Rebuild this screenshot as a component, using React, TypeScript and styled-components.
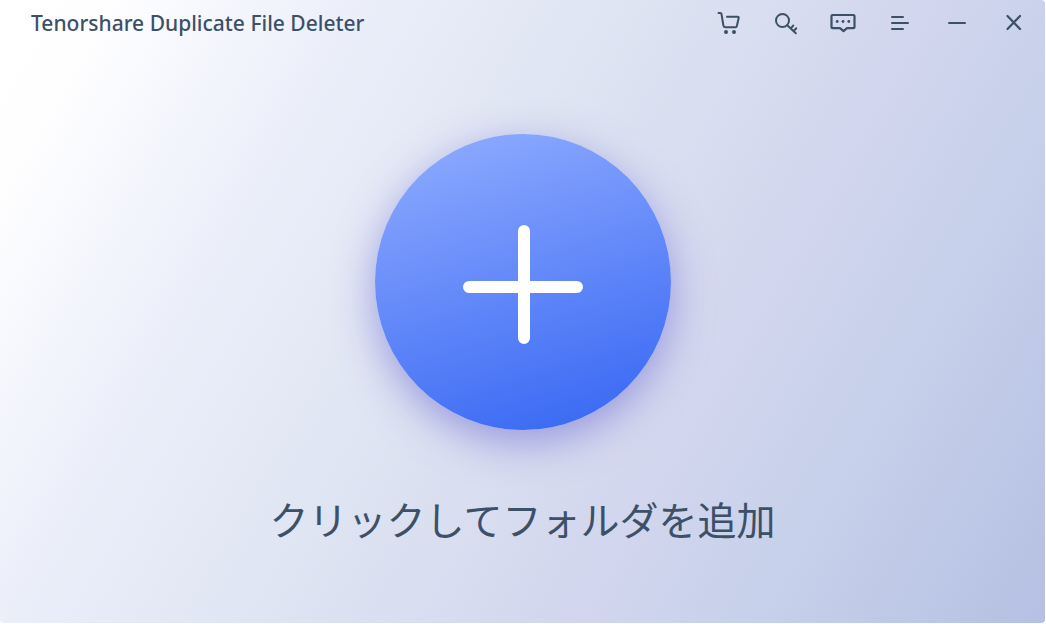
import React from "react";
import styled, { createGlobalStyle } from "styled-components";

const GlobalStyle = createGlobalStyle`
  *, *::before, *::after { box-sizing: border-box; }
  body { margin: 0; background: #ffffff; }
`;

const Window = styled.div`
  display: flex;
  flex-direction: column;
  min-height: calc(100vh - 1px);
  margin-right: 1px;
  border-radius: 4px;
  color: #3c5068;
  font-family: "Noto Sans", "Noto Sans CJK JP", sans-serif;
  background: linear-gradient(
    120deg,
    #ffffff 0%,
    #fefeff 8%,
    #eceffa 25%,
    #dee4f2 45%,
    #d2d6ee 66%,
    #c6d0ea 80%,
    #b5c0e3 100%
  );
`;

const TitleBar = styled.header`
  display: flex;
  align-items: center;
  justify-content: space-between;
  height: 46px;
  padding: 0 15px 0 31px;
`;

const Title = styled.h1`
  margin: 0;
  font-family: "Noto Sans", sans-serif;
  font-size: 21px;
  font-weight: 500;
  line-height: 28px;
  white-space: nowrap;
`;

const Toolbar = styled.nav`
  display: flex;
  gap: 25px;
`;

const IconButton = styled.button`
  display: flex;
  align-items: center;
  justify-content: center;
  width: 32px;
  height: 32px;
  padding: 0;
  border: 0;
  background: none;
  color: inherit;
  cursor: pointer;
`;

const Icon = styled.svg`
  display: block;
  width: 28px;
  height: 28px;
  fill: none;
  stroke: currentColor;
  stroke-width: 2;
  stroke-linecap: round;
  stroke-linejoin: round;
`;

const Main = styled.main`
  display: flex;
  flex-direction: column;
  align-items: center;
  padding-top: 88px;
`;

const AddButton = styled.button`
  display: flex;
  justify-content: center;
  width: 296px;
  height: 296px;
  padding: 90px 0 0 2px;
  border: 0;
  border-radius: 50%;
  background: linear-gradient(163deg, #8eabff 4%, #6a8efa 42%, #3d6cf4 90%);
  box-shadow: 0 12px 40px rgba(88, 84, 205, 0.5);
  cursor: pointer;
`;

const Plus = styled.svg`
  display: block;
  width: 122px;
  height: 122px;
  stroke: #ffffff;
  stroke-width: 12;
  stroke-linecap: round;
`;

const Prompt = styled.p`
  margin: 58px 0 0;
  font-family: "Noto Sans CJK JP", sans-serif;
  font-size: 39px;
  line-height: 60px;
`;

const tools = [
  {
    label: "Buy",
    art: (
      <>
        <path d="M3.500 4h1.800q1 0 1.200 1l1.900 11.500q.2 1.700 1.800 1.700h10.100q1.400 0 1.600-1.400L23.700 9q.1-1.300-1.200-1.300H12" />
        <g fill="currentColor" stroke="none">
          <circle cx="11" cy="23" r="2" />
          <circle cx="19" cy="23" r="2" />
        </g>
      </>
    ),
  },
  {
    label: "Register",
    art: (
      <>
        <circle cx="10.500" cy="11.500" r="6.500" />
        <path d="M15.200 16.200l8.600 8M18.800 19.300l2.500-2.800M21.700 22l2.600-2.800" />
      </>
    ),
  },
  {
    label: "Feedback",
    art: (
      <>
        <path
          strokeWidth="2.200"
          d="M3.500 6h21q1 0 1 1v11.200q0 1-1 1h-6.500l-3.500 3-3.500-3H3.500q-1 0-1-1V7q0-1 1-1z"
        />
        <g fill="currentColor" stroke="none">
          <circle cx="8.200" cy="12.500" r="1.400" />
          <circle cx="14" cy="12.500" r="1.400" />
          <circle cx="19.800" cy="12.500" r="1.400" />
        </g>
      </>
    ),
  },
  { label: "Menu", art: <path d="M6 8h11M6 14h16M6 20h11" /> },
  { label: "Minimize", art: <path d="M6 14h16" /> },
  {
    label: "Close",
    art: <path strokeWidth="2.200" d="M7.500 7l12.500 13M20 7l-12.500 13" />,
  },
];

export default function App() {
  return (
    <>
      <GlobalStyle />
      <Window>
        <TitleBar>
          <Title>Tenorshare Duplicate File Deleter</Title>
          <Toolbar>
            {tools.map((tool) => (
              <IconButton key={tool.label} type="button" aria-label={tool.label}>
                <Icon viewBox="0 0 28 28" aria-hidden="true">
                  {tool.art}
                </Icon>
              </IconButton>
            ))}
          </Toolbar>
        </TitleBar>
        <Main>
          <AddButton type="button" aria-labelledby="add-folder">
            <Plus viewBox="0 0 122 122" aria-hidden="true">
              <path d="M61 7v107M6 63h108" />
            </Plus>
          </AddButton>
          <Prompt id="add-folder">クリックしてフォルダを追加</Prompt>
        </Main>
      </Window>
    </>
  );
}
